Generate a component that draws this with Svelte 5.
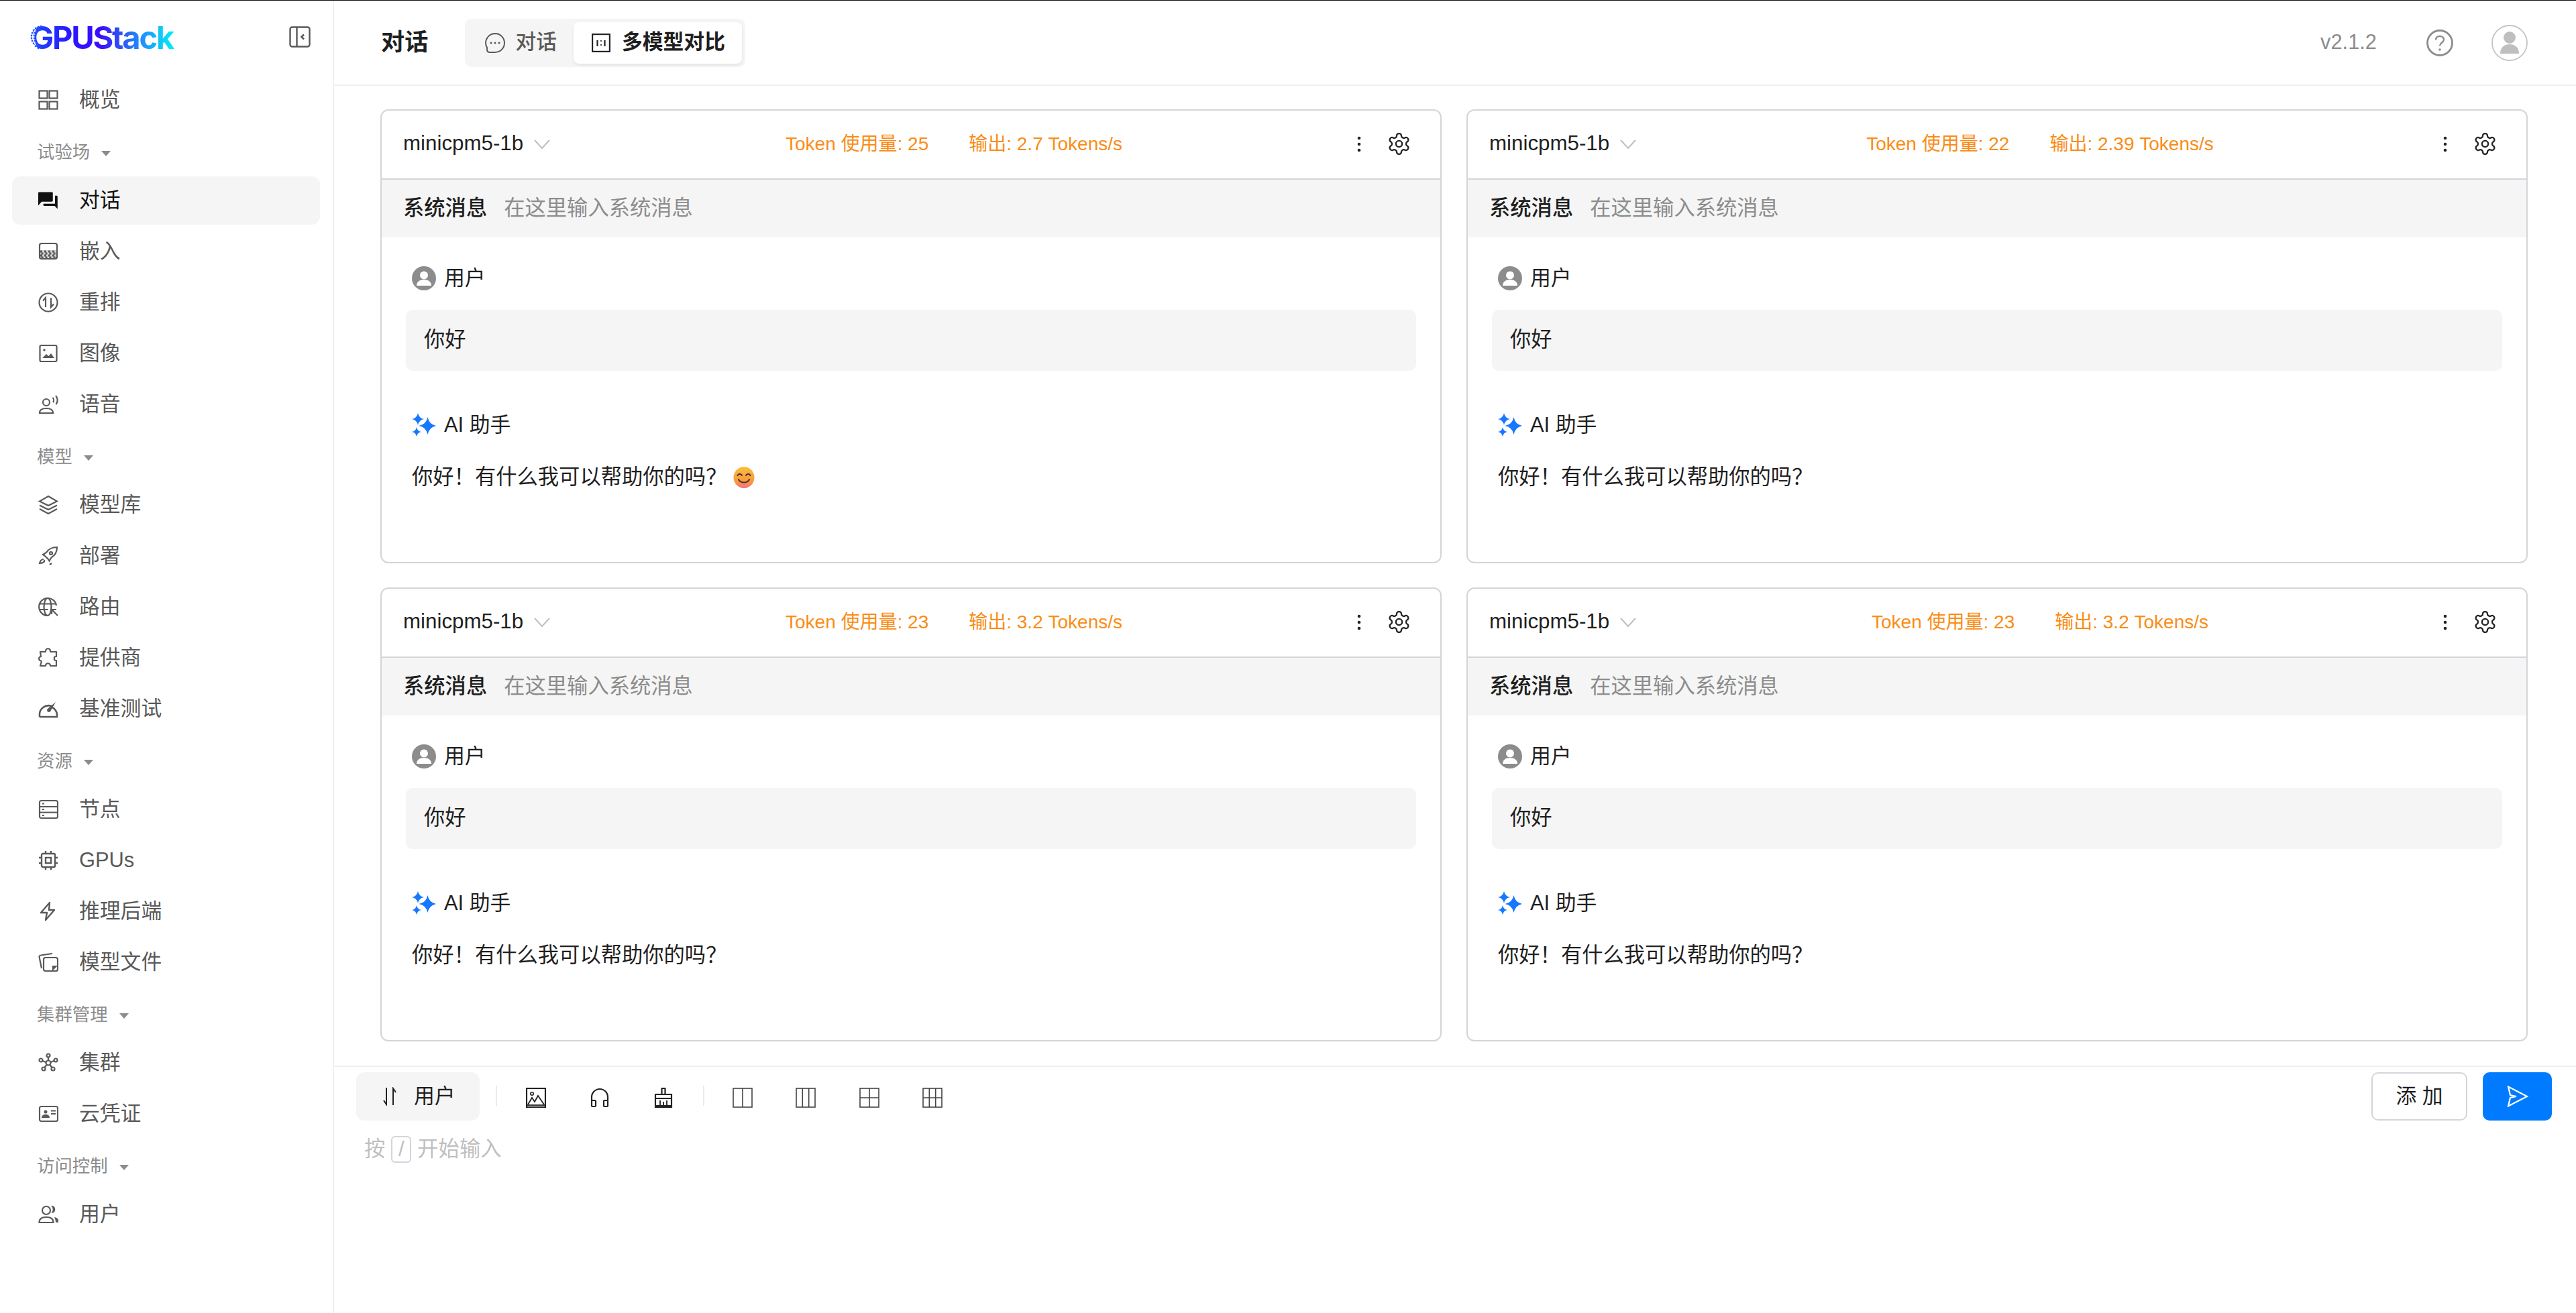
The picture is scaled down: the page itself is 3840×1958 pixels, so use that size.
<script>
  const I = {
    grid: '<rect x="1.500" y="1.500" width="12" height="11"/><rect x="16.500" y="1.500" width="12" height="11"/><rect x="1.500" y="17.500" width="12" height="11"/><rect x="16.500" y="17.500" width="12" height="11"/>',
    forum: '<path fill="#111" stroke="none" transform="scale(1.28)" d="M21 6h-1.500v9.500H6v1.500c0 .55.45 1 1 1h12l3.500 3.500V7c0-.55-.45-1-1.500-1zm-4 6V3c0-.55-.45-1-1-1H1c-.55 0-1 .45-1 1v14.500l4-4.500H16c.55 0 1-.45 1-1z"/>',
    embed: '<rect x="2" y="3" width="26" height="23" rx="3"/><path fill="currentColor" stroke="none" d="M2 13h26v13H2z" opacity=".25"/><path stroke-dasharray="3 3" stroke-width="3" d="M3 15h24M4.500 18h22M3 21h24M4.500 24h22"/>',
    rerank: '<circle cx="15" cy="15" r="13.500"/><path d="M11 22V8l-4 4.500M19 8v14l4-4.500" stroke-width="2.200"/>',
    image: '<rect x="2.500" y="3" width="25" height="24" rx="2"/><circle cx="9" cy="10" r="1.800" fill="currentColor" stroke="none"/><path fill="currentColor" stroke="none" d="M6 22l6-6 3.500 3 3.500-4 5 7z"/>',
    speech: '<circle cx="12" cy="12" r="5"/><path d="M2 28c0-5 4-7 10-7s10 2 10 7z"/><path d="M21.500 5c2 2 2 5 .5 7M26 2c3.500 3.500 3.500 9 .5 13"/>',
    layers: '<path d="M15 2L28 9.500 15 16 2 9.500z"/><path d="M2 15.500L15 22l13-6.500M2 21l13 7 13-7"/>',
    rocket: '<path d="M28 2c-8 0-13 3-16 8l-5 3 3 2 4.500 4.500 2 3 3-5c5-3 8.500-8 8.500-15.500z"/><circle cx="19" cy="11" r="2"/><path d="M8 20c-3 0-5 2-6 6 4 0 8-1.500 7-5M17 28l3-2"/>',
    globe: '<path d="M27 13A13 13 0 1 0 14 28"/><ellipse cx="14" cy="15" rx="5.500" ry="13"/><path d="M1.500 10.500h25M1.500 19h13"/><path d="M20 19h7M20 19v7M20 19l9 9" stroke-width="2.200"/>',
    puzzle: '<path d="M11 5c0-5 7-5 7 0v1h9v7c-4 0-3 2-3 3s-1 3 3 3v8H18c0-5-7-5-7 0H3l2-7c-5-1-5-6-1-7L3 6h8z" stroke-linejoin="round"/>',
    gauge: '<path d="M2 27h26v-2a13 13 0 0 0-9-13M2 27v-2a13.500 13.500 0 0 1 18-14" stroke-width="2.600"/><path fill="currentColor" stroke="none" d="M26 5l-8 14c-1 2-5 1-5-2 0-1 1-2 2-3z"/>',
    server: '<rect x="2" y="2" width="27" height="26" rx="2.500"/><path d="M2 11h27M2 19.500h27M6 6.500h3M6 15h3M6 24h3"/>',
    chip: '<rect x="5" y="5" width="20" height="20" rx="2" stroke-width="2.400"/><rect x="11" y="11" width="8" height="8" stroke-width="2.400"/><path d="M11 1v4M19 1v4M11 25v4M19 25v4M1 11h4M1 19h4M25 11h4M25 19h4" stroke-width="2.400"/>',
    bolt: '<path d="M17 2L4 17h9l-2 11 13-15h-8z" stroke-width="2.400" stroke-linejoin="round"/>',
    file: '<rect x="8" y="8" width="21" height="20" rx="3"/><path d="M5 24L1.500 7c0-1.500 1-2.500 2.500-2.500L21 2" /><path fill="currentColor" stroke="none" d="M29 20l-8 8v-8z"/>',
    cluster: '<circle cx="15" cy="15" r="3.500"/><circle cx="15" cy="4" r="2.500"/><circle cx="4" cy="11" r="2.500"/><circle cx="26" cy="11" r="2.500"/><circle cx="8" cy="24" r="2.500"/><circle cx="22" cy="24" r="2.500"/><path d="M15 6.500v5M6.500 12l5 2M23.500 12l-5 2M9.500 22l3-4M20.500 22l-3-4"/>',
    card: '<rect x="2" y="4" width="27" height="22" rx="2.500"/><circle cx="11" cy="12" r="2.500" fill="currentColor" stroke="none"/><path fill="currentColor" stroke="none" d="M5 21c0-7 12-7 12 0z"/><path d="M19 10.500h7M19 15h7"/>',
    users: '<circle cx="12" cy="9" r="6"/><path d="M1.500 27c0-6 4-8 10.500-8s10.500 2 10.500 8z"/><path fill="currentColor" stroke="none" d="M19 2.500c5-1 7 3 6 7-.5 2-3 4-5.500 3.500 3-3 3-8-.5-10.500zM24 19c4 1 7 3 7 8h-5c0-3-1-6-2-8z"/>'
  };

  const nav = [
    { items: [{ t: '概览', i: 'grid' }] },
    { label: '试验场', items: [
      { t: '对话', i: 'forum', active: true }, { t: '嵌入', i: 'embed' }, { t: '重排', i: 'rerank' }, { t: '图像', i: 'image' }, { t: '语音', i: 'speech' }
    ] },
    { label: '模型', items: [
      { t: '模型库', i: 'layers' }, { t: '部署', i: 'rocket' }, { t: '路由', i: 'globe' }, { t: '提供商', i: 'puzzle' }, { t: '基准测试', i: 'gauge' }
    ] },
    { label: '资源', items: [
      { t: '节点', i: 'server' }, { t: 'GPUs', i: 'chip' }, { t: '推理后端', i: 'bolt' }, { t: '模型文件', i: 'file' }
    ] },
    { label: '集群管理', items: [{ t: '集群', i: 'cluster' }, { t: '云凭证', i: 'card' }] },
    { label: '访问控制', items: [{ t: '用户', i: 'users' }] }
  ];

  const cards = [
    { token: 25, speed: '2.7', emoji: true },
    { token: 22, speed: '2.39' },
    { token: 23, speed: '3.2' },
    { token: 23, speed: '3.2' }
  ];

  const star = (x, y, r) => {
    const k = r * 0.16;
    return `M${x} ${y - r}Q${x + k} ${y - k} ${x + r} ${y}Q${x + k} ${y + k} ${x} ${y + r}Q${x - k} ${y + k} ${x - r} ${y}Q${x - k} ${y - k} ${x} ${y - r}Z`;
  };
  const gear = 'M12.220 2h-.44a2 2 0 0 0-2 2v.18a2 2 0 0 1-1 1.730l-.43.25a2 2 0 0 1-2 0l-.15-.08a2 2 0 0 0-2.730.73l-.22.38a2 2 0 0 0 .73 2.730l.15.1a2 2 0 0 1 1 1.720v.51a2 2 0 0 1-1 1.740l-.15.09a2 2 0 0 0-.73 2.730l.22.38a2 2 0 0 0 2.730.73l.15-.08a2 2 0 0 1 2 0l.43.25a2 2 0 0 1 1 1.730V20a2 2 0 0 0 2 2h.44a2 2 0 0 0 2-2v-.18a2 2 0 0 1 1-1.730l.43-.25a2 2 0 0 1 2 0l.15.08a2 2 0 0 0 2.730-.73l.22-.39a2 2 0 0 0-.73-2.730l-.15-.08a2 2 0 0 1-1-1.740v-.5a2 2 0 0 1 1-1.740l.15-.09a2 2 0 0 0 .73-2.730l-.22-.38a2 2 0 0 0-2.730-.73l-.15.08a2 2 0 0 1-2 0l-.43-.25a2 2 0 0 1-1-1.730V4a2 2 0 0 0-2-2z';
</script>

<div class="app">
  <aside class="side">
    <div class="brand">
      <div class="logo">
        <span class="logo-text">GPUStack</span>
        <svg class="logo-dots" viewBox="0 0 22 40" width="22" height="40">
          <path fill="#fff" d="M0 0h17c-8 3-10 9-10 20s3 16 11 20H0z" />
          <g fill="#2a55ff">
            {#each [[16,3],[12,4],[8,6],[13,7],[5,9],[9,10],[3,13],[7,13],[2,17],[6,17],[2,21],[6,21],[3,25],[7,25],[5,29],[9,29],[8,33],[12,32],[12,36],[16,36]] as d}
              <circle cx={d[0]} cy={d[1]} r="1.300" />
            {/each}
          </g>
          <path stroke="#2a55ff" stroke-width=".7" fill="none" d="M16 3L8 6 3 13 2 21 5 29 12 36M12 4L5 9 6 17 7 25 12 32" />
        </svg>
      </div>
      <svg class="collapse" viewBox="0 0 32 32" width="32" height="32" fill="none" stroke="#595959" stroke-width="2.400">
        <rect x="1.500" y="1.500" width="29" height="29" rx="3" />
        <path d="M11.500 1.500v29" />
        <path d="M22 12.500l-3.500 3.500 3.500 3.500" stroke-width="2.600" />
      </svg>
    </div>

    <nav class="nav">
      {#each nav as g}
        {#if g.label}
          <div class="group"><span>{g.label}</span><i class="caret"></i></div>
        {/if}
        {#each g.items as it}
          <div class="item" class:active={it.active}>
            <svg class="nav-ic" viewBox="0 0 30 30" width="30" height="30" fill="none" stroke="currentColor" stroke-width="2.200">{@html I[it.i]}</svg>
            <span>{it.t}</span>
          </div>
        {/each}
      {/each}
    </nav>
  </aside>

  <main class="main">
    <header class="top">
      <h1>对话</h1>
      <div class="seg">
        <div class="tab">
          <svg viewBox="0 0 32 32" width="32" height="32" fill="none" stroke="#595959" stroke-width="2">
            <path d="M16 2a14 14 0 0 1 0 28H8c-3 0-4-2-4-4 0-1 .5-2 0-3A14 14 0 0 1 16 2z" />
            <circle cx="10" cy="16" r="1.500" fill="#595959" stroke="none" />
            <circle cx="16" cy="16" r="1.500" fill="#595959" stroke="none" />
            <circle cx="22" cy="16" r="1.500" fill="#595959" stroke="none" />
          </svg>
          <span>对话</span>
        </div>
        <div class="tab on">
          <svg viewBox="0 0 28 28" width="28" height="28" fill="none" stroke="#222" stroke-width="2.200">
            <rect x="1.100" y="1.100" width="25.800" height="25.800" />
            <path d="M8.500 10v9M19.500 10v9" />
            <circle cx="14" cy="11" r="1.100" fill="#222" stroke="none" />
            <circle cx="14" cy="17" r="1.100" fill="#222" stroke="none" />
          </svg>
          <span>多模型对比</span>
        </div>
      </div>
      <div class="top-right">
        <span class="ver">v2.1.2</span>
        <svg class="help" viewBox="0 0 40 40" width="40" height="40" fill="none" stroke="#8c8c8c" stroke-width="2.800">
          <circle cx="20" cy="20" r="18.500" />
          <path d="M14 15.500c0-3.500 2.500-5.500 6-5.500s6 2 6 5c0 4.500-6 4.500-6 9.500" stroke-width="2.400" />
          <circle cx="20" cy="30" r="1.800" fill="#8c8c8c" stroke="none" />
        </svg>
        <svg class="avatar" viewBox="0 0 54 54" width="54" height="54" fill="#bfbfbf">
          <circle cx="27" cy="27" r="26" fill="none" stroke="#c4c4c4" stroke-width="1.800" />
          <circle cx="27" cy="19" r="9" />
          <path d="M13 43c0-9 6-14 14-14s14 5 14 14z" />
        </svg>
      </div>
    </header>

    <section class="grid">
      {#each cards as c}
        <article class="card">
          <div class="card-head">
            <div class="model">
              <span>minicpm5-1b</span>
              <svg viewBox="0 0 24 14" width="24" height="14" fill="none" stroke="#bfbfbf" stroke-width="2"><path d="M1 1l11 12L23 1" /></svg>
            </div>
            <div class="stats">
              <span>Token 使用量: {c.token}</span>
              <span>输出: {c.speed} Tokens/s</span>
            </div>
            <div class="tools">
              <svg viewBox="0 0 6 24" width="6" height="24" fill="#222">
                <circle cx="3" cy="3" r="2.300" /><circle cx="3" cy="12" r="2.300" /><circle cx="3" cy="21" r="2.300" />
              </svg>
              <svg viewBox="0 0 24 24" width="37" height="37" fill="none" stroke="#222" stroke-width="1.500">
                <path d={gear} /><circle cx="12" cy="12" r="3" />
              </svg>
            </div>
          </div>
          <div class="sys"><b>系统消息</b><span>在这里输入系统消息</span></div>
          <div class="body">
            <div class="role">
              <svg viewBox="0 0 36 36" width="36" height="36">
                <circle cx="18" cy="18" r="18" fill="#8c8c8c" />
                <circle cx="18" cy="13.500" r="6" fill="#fff" />
                <path fill="#fff" d="M7 29c0-6 5-9 11-9s11 3 11 9z" />
              </svg>
              <span>用户</span>
            </div>
            <div class="bubble">你好</div>
            <div class="role ai">
              <svg viewBox="0 0 36 36" width="36" height="36" fill="#1677ff">
                <path d={star(23.500, 19, 13)} /><path d={star(9, 9, 9)} /><path d={star(7, 28, 7)} />
              </svg>
              <span>AI 助手</span>
            </div>
            <p class="msg">你好！有什么我可以帮助你的吗？
              {#if c.emoji}
                <svg class="emoji" viewBox="0 0 32 32" width="32" height="32">
                  <defs>
                    <linearGradient id="face" x1="0" y1="0" x2="0" y2="1">
                      <stop offset="0" stop-color="#fbbf3c" />
                      <stop offset=".7" stop-color="#f9983c" />
                      <stop offset="1" stop-color="#f2708a" />
                    </linearGradient>
                  </defs>
                  <ellipse cx="16" cy="16" rx="15.500" ry="16" fill="url(#face)" />
                  <path d="M6.500 13c1.500-3 5-3 6.500 0M19 13c1.500-3 5-3 6.500 0M8 19c3 6 13 6 16 0" fill="none" stroke="#4a2f3a" stroke-width="2" stroke-linecap="round" />
                </svg>
              {/if}
            </p>
          </div>
        </article>
      {/each}
    </section>

    <footer class="foot">
      <div class="bar">
        <div class="role-btn">
          <svg viewBox="0 0 20 28" width="20" height="28" fill="none" stroke="#222" stroke-width="2">
            <path d="M5 1v25L1 20M15 27V2l4 6" />
          </svg>
          <span>用户</span>
        </div>
        <i class="sep"></i>
        <div class="tool first">
          <svg viewBox="0 0 30 30" width="30" height="30" fill="none" stroke="#222" stroke-width="2.200">
            <rect x="1" y="1" width="28" height="28" />
            <circle cx="9" cy="9" r="2.200" stroke-width="1.600" />
            <path d="M3 25l6-10 4 6 5-9 9 13" stroke-width="1.800" />
            <path d="M1 26h28" stroke-width="1.800" />
          </svg>
        </div>
        <div class="tool">
          <svg viewBox="0 0 30 30" width="30" height="30" fill="none" stroke="#222" stroke-width="2.200">
            <path d="M3 19v-5a12 12 0 0 1 24 0v5" />
            <rect x="3" y="19" width="6" height="9" rx="1" />
            <rect x="21" y="19" width="6" height="9" rx="1" />
          </svg>
        </div>
        <div class="tool">
          <svg viewBox="0 0 30 30" width="30" height="30" fill="none" stroke="#222" stroke-width="2.200">
            <path d="M12.500 1h5v9h-5z" />
            <path d="M3 10h24v6H3zM3 16v13h24V16" />
            <path d="M3 27h24M10 19v8M15 21v6M20 19v8" stroke-width="1.800" />
          </svg>
        </div>
        <i class="sep second"></i>
        <div class="tool lay">
          <svg viewBox="0 0 30 30" width="30" height="30" fill="none" stroke="#444" stroke-width="1.600"><rect x="1" y="1" width="28" height="28" /><path d="M15 1v28" /></svg>
        </div>
        <div class="tool lay">
          <svg viewBox="0 0 30 30" width="30" height="30" fill="none" stroke="#444" stroke-width="1.600"><rect x="1" y="1" width="28" height="28" /><path d="M10.300 1v28M19.700 1v28" /></svg>
        </div>
        <div class="tool lay">
          <svg viewBox="0 0 30 30" width="30" height="30" fill="none" stroke="#444" stroke-width="1.600"><rect x="1" y="1" width="28" height="28" /><path d="M15 1v28M1 15h28" /></svg>
        </div>
        <div class="tool lay">
          <svg viewBox="0 0 30 30" width="30" height="30" fill="none" stroke="#444" stroke-width="1.600"><rect x="1" y="1" width="28" height="28" /><path d="M10.300 1v28M19.700 1v28M1 15h28" /></svg>
        </div>
        <div class="actions">
          <button class="add">添 加</button>
          <button class="send" aria-label="发送">
            <svg viewBox="0 0 32 32" width="32" height="32" fill="none" stroke="#fff" stroke-width="2.200"><path d="M2 1.500L30 16 2 30.500 5 18l9-2-9-2z" /></svg>
          </button>
        </div>
      </div>
      <div class="hint">按<kbd>/</kbd>开始输入</div>
    </footer>
  </main>
</div>

<style>
  :global(body) {
    margin: 0;
    background: #fff;
  }
  .app {
    display: flex;
    width: 3840px;
    height: 1958px;
    box-sizing: border-box;
    border-top: 1px solid #111;
    overflow: hidden;
    font-family: "Liberation Sans", "Noto Sans CJK SC", sans-serif;
    font-size: 30.800px;
    line-height: 1.500;
    color: #1f1f1f;
    background: #fff;
  }
  .side {
    width: 498px;
    flex: none;
    box-sizing: border-box;
    border-right: 2px solid #f0f0f0;
  }
  .brand {
    position: relative;
    height: 112px;
    box-sizing: border-box;
    padding: 27px 33px 0 45px;
    display: flex;
    justify-content: space-between;
    align-items: flex-start;
  }
  .logo {
    position: relative;
    width: 216px;
    height: 56px;
  }
  .logo-text {
    display: block;
    width: 216px;
    font-family: Inter, "Liberation Sans", sans-serif;
    font-weight: 700;
    font-size: 47px;
    line-height: 56px;
    letter-spacing: -2.200px;
    white-space: nowrap;
    background: linear-gradient(90deg, #1b4bff 0%, #2a17ff 28%, #3b0cff 48%, #2f50f5 62%, #1a9cff 80%, #00f4f0 100%);
    background-clip: text;
    -webkit-background-clip: text;
    color: transparent;
  }
  .logo-dots {
    position: absolute;
    left: 0;
    top: 8px;
  }
  .collapse {
    margin-top: 11px;
  }
  .nav {
    display: flex;
    flex-direction: column;
    gap: 4px;
  }
  .group {
    height: 63px;
    padding: 7px 0 0 55px;
    display: flex;
    align-items: center;
    gap: 17px;
    font-size: 26.400px;
    color: #8c8c8c;
  }
  .caret {
    width: 0;
    height: 0;
    border-left: 7.500px solid transparent;
    border-right: 7.500px solid transparent;
    border-top: 8px solid #8c8c8c;
    margin-top: 3px;
  }
  .item {
    height: 72px;
    margin: 0 19px 0 18px;
    padding-left: 39px;
    display: flex;
    align-items: center;
    gap: 31px;
    border-radius: 12px;
    color: #595959;
  }
  .item.active {
    background: #f5f5f5;
    color: #111;
  }
  .nav-ic {
    flex: none;
  }
  .main {
    flex: 1;
    min-width: 0;
    display: flex;
    flex-direction: column;
  }
  .top {
    height: 127px;
    flex: none;
    box-sizing: border-box;
    border-bottom: 2px solid #f0f0f0;
    padding-left: 70px;
    display: flex;
    align-items: center;
  }
  h1 {
    margin: 0 55px 0 0;
    font-size: 35.200px;
    font-weight: 700;
    color: #1f1f1f;
  }
  .seg {
    display: flex;
    height: 72px;
    box-sizing: border-box;
    padding: 5px;
    background: #f5f5f5;
    border-radius: 10px;
  }
  .tab {
    display: flex;
    align-items: center;
    gap: 14px;
    padding: 0 25px 0 24px;
    color: #595959;
    font-weight: 500;
  }
  .tab.on {
    padding: 0 25px 0 27px;
    gap: 17px;
    background: #fff;
    border-radius: 8px;
    color: #1f1f1f;
    font-weight: 700;
    box-shadow: 0 2px 4px rgba(0, 0, 0, 0.08);
  }
  .top-right {
    margin-left: auto;
    padding-right: 72px;
    display: flex;
    align-items: center;
  }
  .ver {
    color: #8c8c8c;
    margin-right: 74px;
  }
  .avatar {
    margin-left: 57px;
  }
  .grid {
    flex: 1;
    box-sizing: border-box;
    padding: 35px 72px 0 69px;
    display: grid;
    grid-template-columns: 1fr 1fr;
    grid-auto-rows: 677px;
    column-gap: 37px;
    row-gap: 36px;
  }
  .card {
    border: 2px solid #d4d4da;
    border-radius: 12px;
    overflow: hidden;
    min-width: 0;
    font-size: 31.300px;
  }
  .card-head {
    height: 103px;
    box-sizing: border-box;
    border-bottom: 2px solid #d4d4da;
    padding: 0 43px 2px 32px;
    display: flex;
    align-items: center;
    justify-content: space-between;
  }
  .model {
    display: flex;
    align-items: center;
    gap: 16px;
    width: 258px;
  }
  .stats {
    display: flex;
    gap: 60px;
    margin-right: 38px;
    font-size: 28px;
    color: #fa8c16;
  }
  .tools {
    display: flex;
    align-items: center;
    gap: 38px;
  }
  .sys {
    height: 86px;
    background: #f5f5f5;
    padding-left: 32px;
    display: flex;
    align-items: center;
    gap: 25px;
  }
  .sys b {
    font-weight: 500;
    color: #1f1f1f;
  }
  .sys span {
    color: #8c8c8c;
  }
  .body {
    padding: 43px 36px 0 45px;
  }
  .role {
    display: flex;
    align-items: center;
    gap: 12px;
    height: 36px;
    font-size: 30.800px;
  }
  .role.ai {
    margin-top: 63px;
  }
  .bubble {
    margin: 29px 0 0 -9px;
    height: 91px;
    box-sizing: border-box;
    padding-left: 27px;
    display: flex;
    align-items: center;
    background: #f5f5f5;
    border-radius: 10px;
  }
  .msg {
    margin: 38px 0 0;
    line-height: 44px;
    display: flex;
    align-items: center;
  }
  .emoji {
    margin-left: 10px;
  }
  .foot {
    height: 369px;
    flex: none;
    box-sizing: border-box;
    border-top: 2px solid #f0f0f0;
    padding: 8px 36px 0 33px;
  }
  .bar {
    display: flex;
    align-items: center;
    height: 72px;
  }
  .role-btn {
    width: 184px;
    height: 72px;
    box-sizing: border-box;
    padding-left: 40px;
    display: flex;
    align-items: center;
    gap: 26px;
    background: #f5f5f5;
    border-radius: 12px;
  }
  .sep {
    width: 2px;
    height: 30px;
    margin: 0 0 3px 24px;
    background: #ebebeb;
  }
  .sep.second {
    margin-left: 44px;
  }
  .tool {
    width: 30px;
    height: 30px;
    margin: 0 0 3px 65px;
  }
  .tool.first {
    margin-left: 43px;
  }
  .tool.lay {
    margin-left: 64.300px;
  }
  .sep.second + .tool.lay {
    margin-left: 42px;
  }
  .actions {
    margin-left: auto;
    display: flex;
    gap: 23px;
  }
  button {
    height: 72px;
    margin: 0;
    padding: 0;
    border-radius: 10px;
    font: inherit;
    box-sizing: border-box;
    display: flex;
    align-items: center;
    justify-content: center;
  }
  .add {
    width: 143px;
    background: #fff;
    border: 2px solid #d4d4da;
    color: #1f1f1f;
  }
  .send {
    width: 103px;
    border: 0;
    background: #007aff;
  }
  .hint {
    margin: 23px 0 0 12px;
    display: flex;
    align-items: center;
    color: #bfbfbf;
    height: 40px;
    font-size: 31.300px;
  }
  kbd {
    width: 30px;
    height: 40px;
    box-sizing: border-box;
    margin: 0 9px 0 9px;
    border: 2px solid #d4d4da;
    border-radius: 6px;
    display: flex;
    align-items: center;
    justify-content: center;
    font: inherit;
  }
</style>
